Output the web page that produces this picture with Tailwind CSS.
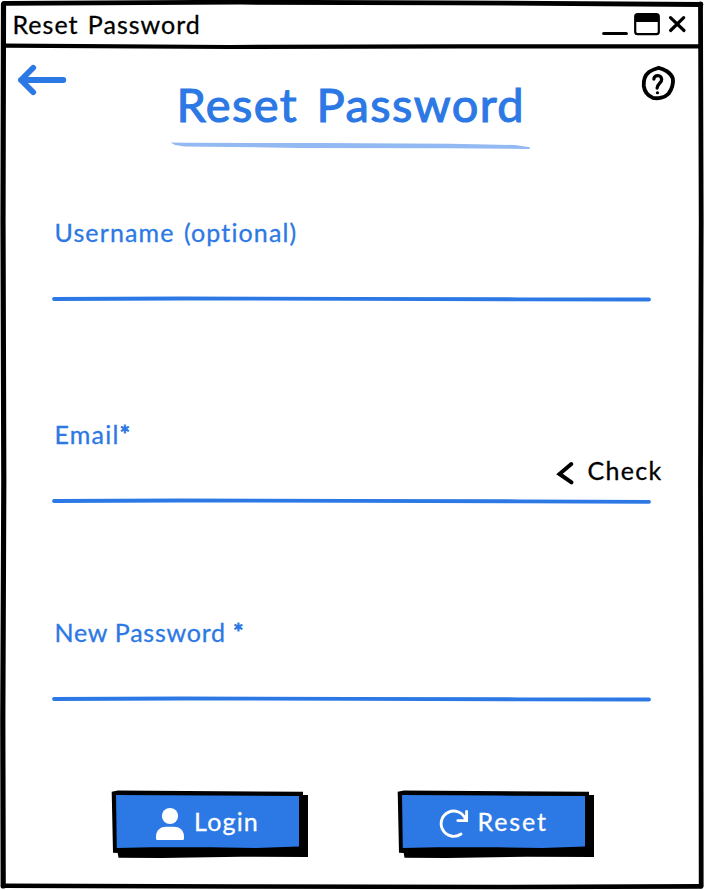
<!DOCTYPE html>
<html lang="en">
<head>
<meta charset="utf-8">
<title>Reset Password</title>
<script src="https://cdn.jsdelivr.net/npm/@tailwindcss/browser@4"></script>
</head>
<body class="bg-white">
<div class="relative w-[704px] h-[890px] overflow-hidden bg-white font-[Lato,sans-serif] text-[25px] leading-8 text-[#2c78e4] flex flex-col">
  <!-- hand-drawn window frame -->
  <svg class="absolute inset-0 pointer-events-none" width="704" height="890" viewBox="0 0 704 890" fill="none" stroke="#000" stroke-linejoin="round" stroke-linecap="round">
    <path d="M4 3.3L240 2.2L450 2.8L701 4.5" stroke-width="4.8"/>
    <path d="M3.5 4L3 220L3.8 480L2.8 720L3.2 886" stroke-width="5.2"/>
    <path d="M700.5 4L701.2 220L700.5 480L701 700L701.2 886" stroke-width="4.8"/>
    <path d="M3 885.7L240 886.5L500 887L701 886.4" stroke-width="4.6"/>
    <path d="M4 45.6L230 47L460 46.4L700 46.4" stroke-width="4.2"/>
  </svg>

  <header class="flex h-12 shrink-0 items-center justify-between pl-[12.5px] pr-[17px] text-black">
    <h2 class="tracking-[1px] [word-spacing:2px] [-webkit-text-stroke:0.3px_#000]">Reset Password</h2>
    <svg width="86" height="28" viewBox="601 11 86 28" fill="none" stroke="#000" stroke-linecap="round" stroke-linejoin="round">
      <path d="M603.6 34.6H626.4" stroke-width="3"/>
      <rect x="635.2" y="15" width="23.6" height="20.2" rx="2.5" stroke-width="2.2"/>
      <path d="M636 16H658V22H636Z" fill="#000" stroke-width="2"/>
      <path d="M670.5 18.7L684 31.5M683.7 18.7L670.6 31.5" stroke-width="3.2"/>
    </svg>
  </header>

  <main class="flex flex-1 flex-col">
    <div class="flex h-[116px] items-start px-[17px]">
      <svg class="mt-4 shrink-0" width="50" height="34" viewBox="17 64 50 34" fill="none" stroke="#2c78e4" stroke-width="5.8" stroke-linecap="round" stroke-linejoin="round">
        <path d="M63.3 80H21M33.2 67.8L21 80L33.2 92.2"/>
      </svg>
      <div class="ml-[102px] flex w-[362px] flex-col">
        <h1 class="ml-[7.5px] mt-[26px] h-[66px] whitespace-nowrap text-[47px] leading-[60px] tracking-[1.4px] [word-spacing:5px] [-webkit-text-stroke:1.1px_#2c78e4]">Reset Password</h1>
        <svg width="362" height="10" viewBox="169 140 362 10" fill="#92b9f2">
          <path d="M170.5 142.6L185 142.8L320 143L450 143.8L515 145L530 147.2L529.5 149L450 148.2L300 147.9L185 146.5L175 145Z"/>
        </svg>
      </div>
      <svg class="ml-auto mr-[10px] mt-[16px]" width="36" height="38" viewBox="641 64 36 38" fill="none" stroke="#000" stroke-linecap="round" stroke-linejoin="round">
        <path d="M658.7 67.8C664 68.7 671 73 672.8 78.5C673.8 83 671.8 89.5 668.5 93.7C665 97.5 658 99 652.8 97.8C648 95.8 644.5 91.5 643.8 86C643.4 80.8 645.3 75 649 72C652 69.8 655.5 68.8 658.7 67.8Z" stroke-width="3.9"/>
        <path d="M653.9 79.1C653.9 76.7 656 75.5 658.2 75.7C661 75.8 662 78.2 661.4 80.8C660.7 83.2 657.2 84.4 657.1 88" stroke-width="3.3"/>
        <path d="M657.4 92.8H657.5" stroke-width="3.1"/>
      </svg>
    </div>

    <section class="flex h-[202px] flex-col px-[51px] pt-[52px]">
      <label class="tracking-[1.12px] [word-spacing:2px] pl-[3.5px] [-webkit-text-stroke:0.3px_#2c78e4]">Username (optional)</label>
      <svg class="mt-[47px]" width="602" height="8" viewBox="51 295 602 8" fill="none" stroke="#2c78e4" stroke-width="3.8" stroke-linecap="round">
        <path d="M54 299L180 298.5L350 298.8L520 299.3L649 299.5"/>
      </svg>
    </section>

    <section class="flex h-[198px] flex-col px-[51px] pt-[52px]">
      <label class="h-8 tracking-[1.2px] pl-[3.5px] [-webkit-text-stroke:0.3px_#2c78e4]">Email<span class="[-webkit-text-stroke:0.9px_#2c78e4]">*</span></label>
      <div class="flex h-[47px] items-start justify-end gap-[12px] pt-[4px] -mr-[9.5px] text-black">
        <svg class="mt-[6px]" width="20" height="26" viewBox="555 460 20 26" fill="none" stroke="#000" stroke-width="4" stroke-linejoin="miter" stroke-linecap="round">
          <path d="M570.3 464L558.5 474L570.5 482.3"/>
        </svg>
        <span class="tracking-[1.3px] [-webkit-text-stroke:0.3px_#000]">Check</span>
      </div>
      <svg width="602" height="8" viewBox="51 497 602 8" fill="none" stroke="#2c78e4" stroke-width="3.8" stroke-linecap="round">
        <path d="M54 501L180 500.5L350 500.8L520 501.3L649 501.8"/>
      </svg>
    </section>

    <section class="flex h-[226px] flex-col px-[51px] pt-[52px]">
      <label class="tracking-[0.75px] pl-[3.5px] [-webkit-text-stroke:0.3px_#2c78e4]">New Password <span class="[-webkit-text-stroke:0.9px_#2c78e4]">*</span></label>
      <svg class="mt-[47px]" width="602" height="8" viewBox="51 695 602 8" fill="none" stroke="#2c78e4" stroke-width="3.8" stroke-linecap="round">
        <path d="M54 699L180 698.5L350 698.8L520 699.3L649 699.5"/>
      </svg>
    </section>

    <div class="flex gap-[88px] pl-[111px] text-white">
      <button class="relative flex h-[69px] w-[198px] items-start pl-[44px] pt-[16px]">
        <svg class="absolute inset-0" width="198" height="69" viewBox="0 0 198 69">
          <path d="M.7 1.7L7 .5L192 1.8V5H197V67L130 66.8L50 68L7.5 67.8L6.7 63L2 62.8Z"/>
          <path d="M5 5.1L100 5.6L188 6V56.5L145 58L100 57.2L40 57.2L5.8 58Z" fill="#2c78e4"/>
        </svg>
        <svg class="relative" width="30" height="34" viewBox="155 806 30 34" fill="#fff">
          <circle cx="170" cy="816" r="8.1"/>
          <path d="M156 838.5V836.5C156 830 161 826.8 166 826.8H174C179 826.8 184 830 184 836.5V838.5Q184 840 182.5 840H157.5Q156 840 156 838.5Z"/>
        </svg>
        <span class="relative ml-[9px] -mt-[1px] tracking-[1.2px] [-webkit-text-stroke:0.3px_#fff]">Login</span>
      </button>
      <button class="relative flex h-[69px] w-[198px] items-start pl-[41px] pt-[16px]">
        <svg class="absolute inset-0" width="198" height="69" viewBox="0 0 198 69">
          <path d="M.7 1.7L7 .5L192 1.8V5H197V67L130 66.8L50 68L7.5 67.8L6.7 63L2 62.8Z"/>
          <path d="M5 5.1L100 5.6L188 6V56.5L145 58L100 57.2L40 57.2L5.8 58Z" fill="#2c78e4"/>
        </svg>
        <svg class="relative" width="32" height="34" viewBox="438 806 32 34" fill="none" stroke="#fff" stroke-width="2.9" stroke-linecap="round">
          <path d="M461 834A12.6 12.6 0 1 1 465.5 819.2M466.6 811.5V820.6H457.8"/>
        </svg>
        <span class="relative ml-[7.5px] -mt-[1px] tracking-[1.9px] [-webkit-text-stroke:0.3px_#fff]">Reset</span>
      </button>
    </div>
  </main>
</div>
</body>
</html>
